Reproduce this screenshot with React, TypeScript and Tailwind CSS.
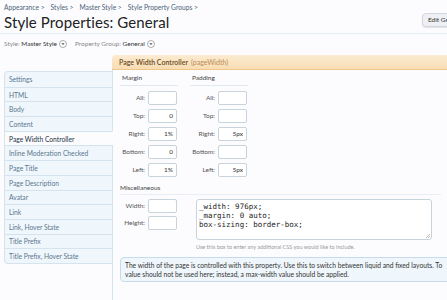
import React from 'react';

const navItems = [
  'Settings',
  'HTML',
  'Body',
  'Content',
  'Page Width Controller',
  'Inline Moderation Checked',
  'Page Title',
  'Page Description',
  'Avatar',
  'Link',
  'Link, Hover State',
  'Title Prefix',
  'Title Prefix, Hover State',
];

const marginRows: [string, string][] = [
  ['All:', ''],
  ['Top:', '0'],
  ['Right:', '1%'],
  ['Bottom:', '0'],
  ['Left:', '1%'],
];

const paddingRows: [string, string][] = [
  ['All:', ''],
  ['Top:', ''],
  ['Right:', '5px'],
  ['Bottom:', ''],
  ['Left:', '5px'],
];

const Chevron = () => (
  <svg width="8" height="8" viewBox="0 0 8 8" className="ml-[2px] inline-block">
    <circle cx="4" cy="4" r="3.5" fill="#fff" stroke="#8a8a8a" strokeWidth="0.7" />
    <path d="M2.3 3.3 L4 5 L5.7 3.3 Z" fill="#555" />
  </svg>
);

const Field = ({ label, value }: { label: string; value: string }) => (
  <div className="flex items-center h-[14px]">
    <span className="w-[28px] pr-[3px] text-right text-[6.5px] text-[#555]">{label}</span>
    <div className="w-[29px] h-[14px] border border-[#c9d3dc] bg-white rounded-[2px] flex items-center justify-end pr-[3px] text-[6.5px] text-[#333]">
      {value}
    </div>
  </div>
);

const FieldGroup = ({ title, rows }: { title: string; rows: [string, string][] }) => (
  <div className="w-[58px]">
    <div className="h-[15px] flex items-center text-[6.5px] text-[#444] border-b border-[#e1e9f0] mb-[5px] pl-[2px]">
      {title}
    </div>
    <div className="flex flex-col gap-[4px]">
      {rows.map(([l, v]) => (
        <Field key={l} label={l} value={v} />
      ))}
    </div>
  </div>
);

export default function App() {
  return (
    <div
      className="w-[447px] h-[300px] overflow-hidden bg-[#fcfcff] text-[#333]"
      style={{ fontFamily: 'Lato, "Open Sans", sans-serif' }}
    >
      <div className="px-[4px] pt-[2px] text-[6.7px] text-[#4d6377] flex gap-[6px] h-[12px] items-center">
        <span>Appearance &gt;</span>
        <span>Styles &gt;</span>
        <span>Master Style &gt;</span>
        <span>Style Property Groups &gt;</span>
      </div>
      <div className="flex items-center justify-between h-[22px] border-b border-[#e6eef4] pl-[4px] overflow-hidden">
        <h1 className="text-[15px] leading-none text-[#222] tracking-[0.1px]">Style Properties: General</h1>
        <button className="h-[14px] w-[40px] -mr-[15px] pl-[5px] text-left rounded-[4px] border border-[#d3d6dc] bg-[#eef0f4] text-[6.5px] text-[#333] whitespace-nowrap self-start mt-[1px] shadow-[0_1px_1px_rgba(0,0,0,0.1)]">
          Edit Group
        </button>
      </div>
      <div className="h-[19px] flex items-center px-[4px] text-[6.5px] gap-[8px]">
        <span className="flex items-center">
          <span className="text-[#888]">Style:&nbsp;</span>
          <span className="text-[#333]">Master Style</span>
          <Chevron />
        </span>
        <span className="flex items-center">
          <span className="text-[#888]">Property Group:&nbsp;</span>
          <span className="text-[#333]">General</span>
          <Chevron />
        </span>
      </div>

      <div className="flex mt-[2px]">
        <div className="w-[109px] ml-[4px] mt-[16px] -mr-[1px] relative z-10 self-start">
          <div className="border-t border-l border-b border-[#d5e3ef] rounded-l-[4px] bg-[#f0f7fc] overflow-hidden">
            {navItems.map((item, i) => {
              const active = item === 'Page Width Controller';
              return (
                <div
                  key={item}
                  className={`h-[14.7px] flex items-center pl-[4px] text-[6.7px] border-r ${
                    i > 0 ? 'border-t border-t-[#d5e3ef]' : ''
                  } ${
                    active
                      ? 'bg-[#fcfcff] border-r-[#fcfcff] text-[#1f3346]'
                      : 'border-r-[#d5e3ef] text-[#5b7690]'
                  }`}
                >
                  {item}
                </div>
              );
            })}
          </div>
        </div>

        <div className="flex-1 min-w-0">
          <div className="h-[15px] rounded-tl-[4px] bg-gradient-to-b from-[#fbebd0] to-[#f8ddb4] border-b border-[#f0c588] flex items-center pl-[7px] text-[7px]">
            <span className="text-[#6b4a22] font-semibold">Page Width Controller</span>
            <span className="text-[#b98c54] ml-[3px]">(pageWidth)</span>
          </div>
          <div className="border-l border-[#d5e3ef] h-[240px] pl-[7px] pt-[1px]">
            <div className="flex gap-[12px]">
              <FieldGroup title="Margin" rows={marginRows} />
              <FieldGroup title="Padding" rows={paddingRows} />
            </div>

            <div className="mt-[4px] h-[14px] flex items-center text-[6.5px] text-[#444] border-b border-[#e8eef3] mr-[6px]">
              Miscellaneous
            </div>
            <div className="flex mt-[4px]">
              <div className="flex flex-col gap-[3px]">
                <Field label="Width:" value="" />
                <Field label="Height:" value="" />
              </div>
              <div className="ml-[19px]">
                <div
                  className="w-[236px] h-[41px] border border-[#c9d3dc] rounded-[3px] bg-white pl-[2px] pt-[2px] text-[7.5px] leading-[9px] text-[#222] whitespace-pre relative"
                  style={{ fontFamily: '"DejaVu Sans Mono", "Liberation Mono", monospace' }}
                >
                  {'_width: 976px;\n_margin: 0 auto;\nbox-sizing: border-box;'}
                  <svg width="5" height="5" viewBox="0 0 5 5" className="absolute right-[1px] bottom-[1px]">
                    <path d="M1 5 L5 1 M3 5 L5 3" stroke="#999" strokeWidth="0.6" />
                  </svg>
                </div>
                <div className="text-[5.5px] text-[#999] mt-[3px]">
                  Use this box to enter any additional CSS you would like to include.
                </div>
              </div>
            </div>

            <div className="mt-[6px] -mr-[40px] h-[25px] border border-[#c6dbec] rounded-[4px] bg-[#f0f7fc] px-[4px] flex flex-col justify-center text-[6.7px] leading-[9px] text-[#333] whitespace-nowrap">
              <div>The width of the page is controlled with this property. Use this to switch between liquid and fixed layouts. To</div>
              <div>value should not be used here; instead, a max-width value should be applied.</div>
            </div>
          </div>
        </div>
      </div>
    </div>
  );
}
